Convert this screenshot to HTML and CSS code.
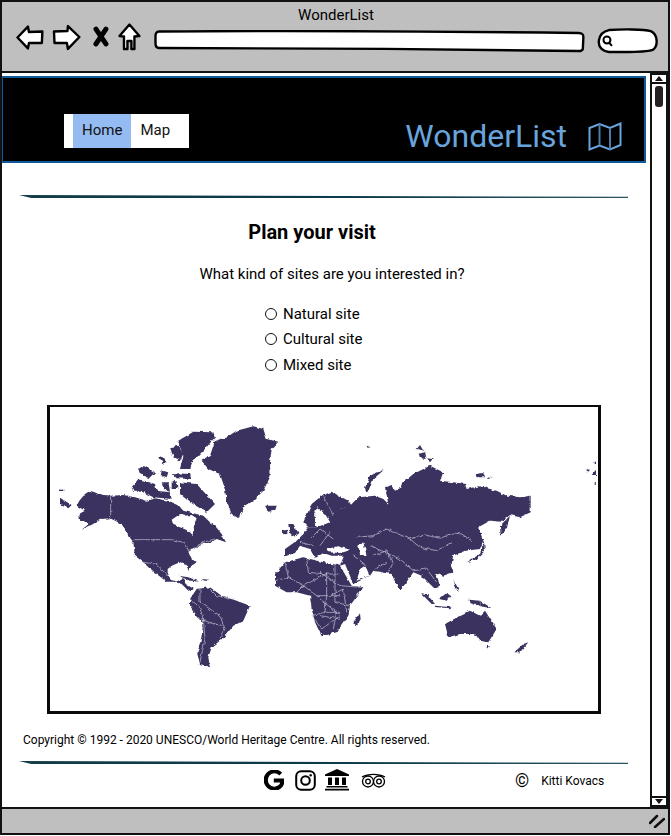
FILE: index.html
```html
<!DOCTYPE html>
<html lang="en">
<head>
<meta charset="utf-8">
<title>WonderList</title>
<link rel="stylesheet" href="styles.css">
</head>
<body>
<div class="window">
  <div class="topbar">
    <div class="win-title">WonderList</div>
    <div class="toolbar">
      <svg class="tool back" width="28" height="25" viewBox="0 0 28 25"><path d="M1.500 12.500 L12 1.500 L13 7 L26.500 6.500 L26 18 L13 18 L12 23.500 Z"/></svg>
      <svg class="tool fwd" width="29" height="27" viewBox="0 0 29 27"><path d="M27.500 13 L16 2 L15.500 7 L2 7.500 L2.500 19 L15 19 L16 25 Z"/></svg>
      <svg class="tool close" width="18" height="21" viewBox="0 0 18 21"><path class="x" d="M4 3 L14 18 M14 3 L4 18"/></svg>
      <svg class="tool home" width="23" height="28" viewBox="0 0 23 28"><path d="M11.500 1.500 L21.500 13 L16.500 13.500 L16.500 26 L13.500 26 L13.500 18 L9.500 18 L9.500 26 L6 26 L6 13.500 L1.500 13 Z"/></svg>
      <svg class="address" width="434" height="23" viewBox="0 0 434 23"><path d="M5 1.500 C120 .5 300 1.500 427 3 Q432 3 431.500 8 L431 19 Q430 21.500 426 21 C300 19 120 18 5 18 Q1.500 18 1.500 13 L1.500 6 Q1.500 1.500 5 1.500 Z"/></svg>
      <svg class="search" width="62" height="26" viewBox="0 0 62 26"><path class="pill" d="M12 2 C25 1 47 1 54 3 C61 6 62 18 56 22 C47 25 25 24 12 24 C4 23 1 18 2 12 C3 6 7 3 12 2 Z"/><circle class="lens" cx="10" cy="12" r="3.500"/><path class="lens" d="M12.500 15 L15 18"/></svg>
    </div>
  </div>

  <div class="middle">
    <main class="page">
      <header class="site-header">
        <nav class="nav">
          <a class="nav-item active">Home</a>
          <a class="nav-item">Map</a>
        </nav>
        <div class="brand">
          <span class="brand-name">WonderList</span>
          <svg class="brand-icon" width="34" height="29" viewBox="0 0 34 29"><path d="M1.500 6 L11.500 2 L22 6 L32.500 1.500 L32.500 23 L22 27.500 L11.500 23.500 L1.500 27.500 Z"/><path class="fold" d="M11.500 2 V23.500 M22 6 V27.500"/></svg>
        </div>
      </header>

      <div class="rule"></div>

      <section class="plan">
        <h1 class="plan-title">Plan your visit</h1>
        <p class="plan-question">What kind of sites are you interested in?</p>
        <div class="options">
          <label class="option"><input class="radio" type="radio" name="kind">Natural site</label>
          <label class="option"><input class="radio" type="radio" name="kind">Cultural site</label>
          <label class="option"><input class="radio" type="radio" name="kind">Mixed site</label>
        </div>
      </section>

      <div class="map-box">
        <svg class="world" width="548" height="303" viewBox="50 408 548 303">
          <defs>
            <filter id="coast" x="-2%" y="-2%" width="104%" height="104%">
              <feTurbulence type="fractalNoise" baseFrequency="0.22" numOctaves="2" seed="4" result="n"/>
              <feDisplacementMap in="SourceGraphic" in2="n" scale="3.500" xChannelSelector="R" yChannelSelector="G"/>
              <feGaussianBlur stdDeviation="0.280"/>
            </filter>
          </defs>
          <g class="coast">
          <g transform="translate(40 400) scale(.33333)">
            <g class="land">
              <path d="M118 305 L135 285 L150 275 L185 287 L212 290 L250 288 L285 295 L320 305 L345 298 L385 305 L415 318 L430 335 L470 345 L490 350 L510 370 L525 380 L545 405 L558 430 L530 420 L510 432 L490 432 L465 448 L445 458 L450 470 L470 490 L455 500 L445 515 L440 495 L420 490 L395 500 L383 510 L383 530 L392 542 L410 548 L430 540 L437 555 L462 570 L445 575 L425 555 L400 548 L380 548 L350 525 L325 505 L310 490 L285 470 L280 430 L262 405 L245 375 L210 358 L185 360 L150 380 L125 392 L150 372 L120 365 L118 345 L135 335 L110 320 Z"/>
              <path class="sea" d="M395 362 L420 345 L432 350 L455 348 L470 358 L463 375 L458 408 L445 395 L420 385 L400 378 Z"/>
              <path d="M590 95 L640 82 L670 90 L680 120 L715 128 L695 150 L690 190 L692 230 L670 275 L640 305 L610 325 L595 358 L575 345 L560 310 L555 270 L540 225 L505 210 L485 185 L510 170 L525 125 L560 115 Z"/>
              <path d="M415 125 L460 98 L520 100 L525 115 L495 150 L460 185 L450 210 L420 210 L430 170 L420 145 Z"/>
              <path d="M390 145 L415 140 L430 165 L420 185 L400 175 Z"/>
              <path d="M275 265 L295 240 L345 255 L350 275 L390 280 L395 300 L340 295 L300 275 L280 275 Z"/>
              <path d="M295 210 L310 200 L345 220 L325 240 L300 225 Z"/>
              <path d="M355 175 L365 172 L380 190 L370 195 Z"/>
              <path d="M365 215 L385 220 L380 235 L362 230 Z"/>
              <path d="M395 222 L450 225 L455 240 L410 238 Z"/>
              <path d="M420 250 L470 255 L525 315 L500 340 L450 310 L420 285 Z"/>
              <path d="M365 250 L385 250 L390 275 L370 270 Z"/>
              <path d="M395 245 L410 248 L412 270 L395 270 Z"/>
              <path d="M60 296 L95 318 L85 328 L60 318 Z"/>
              <path d="M60 272 H70 V276 H60 Z"/>
              <path d="M415 530 L445 535 L480 548 L450 545 Z"/>
              <path d="M485 540 L505 542 L495 546 Z"/>
              <path d="M450 600 L470 570 L510 565 L545 590 L590 605 L630 620 L610 665 L580 680 L560 705 L540 725 L515 745 L505 775 L510 805 L480 795 L472 765 L485 710 L490 670 L470 650 L450 620 Z"/>
              <path d="M705 525 L735 490 L790 475 L850 490 L900 500 L935 560 L970 565 L930 620 L925 650 L890 700 L845 712 L825 670 L815 630 L810 590 L770 580 L740 580 L705 560 Z"/>
              <path d="M675 320 L710 320 L705 335 L685 338 Z"/>
              <path d="M745 375 L760 375 L777 405 L755 412 L748 395 Z"/>
              <path d="M728 395 L742 392 L742 405 L730 406 Z"/>
            </g>
            <g class="border">
              <path d="M212 290 V358"/>
              <path d="M280 422 L395 422 L430 430 L445 455 L490 430 L525 420"/>
              <path d="M310 490 L345 495 L385 530"/>
              <path d="M480 570 L480 610 L510 630 L540 650 L555 690 L540 715"/>
              <path d="M490 660 L495 720 L480 790"/>
              <path d="M450 600 L480 625 L490 665 L545 680"/>
              <path d="M510 570 L530 590 L570 600"/>
              <path d="M735 490 L745 535 L705 545 M745 535 L790 560 L860 525 L895 525 M800 480 L805 520 L860 525 L860 590 L900 590"/>
              <path d="M770 580 L790 560 L830 590 L860 590 L855 640 L815 650 L845 690 L900 650 M855 640 L900 640 M885 500 V610 L930 620"/>
              <path d="M785 415 L840 425 L890 420 M810 405 L815 455 M840 390 L850 440 M865 385 L875 445 M770 430 L790 445"/>
              <path d="M820 380 L830 320 M860 300 L875 360"/>
            </g>
          </g>
          <g transform="translate(320 400) scale(.33333)">
            <g class="land">
              <path d="M90 320 L115 295 L165 290 L190 300 L205 315 L195 265 L215 258 L225 275 L245 265 L250 250 L280 225 L330 200 L370 220 L360 245 L400 250 L435 255 L440 270 L480 262 L530 275 L560 290 L600 295 L632 290 L632 340 L600 355 L570 348 L545 368 L510 365 L475 385 L490 425 L480 450 L435 455 L400 470 L395 495 L400 520 L370 530 L345 520 L360 560 L345 570 L320 545 L305 530 L280 520 L245 570 L235 570 L215 525 L160 515 L150 530 L100 555 L60 500 L72 470 L35 470 L10 462 L-15 478 L-30 450 L-60 440 L-75 462 L-105 472 L-105 450 L-70 425 L-50 405 L-35 385 L-10 385 L30 370 L60 330 Z"/>
              <path d="M-50 370 L-25 315 L5 290 L35 278 L85 305 L95 320 L60 330 L55 370 L40 385 L15 345 L-8 325 L-18 345 L-10 385 L-35 385 Z"/>
              <path d="M135 270 L150 230 L195 210 L160 240 L145 280 Z"/>
              <path d="M290 150 L300 138 L310 155 Z"/>
              <path d="M297 165 L315 158 L320 180 L300 178 Z"/>
              <path d="M320 178 L338 180 L330 190 Z"/>
              <path d="M140 140 L152 145 L142 146 Z"/>
              <path d="M467 225 L490 222 L495 235 L470 235 Z"/>
              <path d="M505 232 L518 235 L505 237 Z"/>
              <path d="M540 380 L570 350 L560 390 L542 410 Z"/>
              <path d="M440 490 L480 465 L490 440 L480 410 L492 430 L495 455 L470 480 Z"/>
              <path d="M100 670 L120 640 L122 660 L110 682 Z"/>
              <path d="M375 675 L420 650 L450 635 L480 650 L495 635 L530 690 L505 730 L480 725 L465 705 L420 705 L385 715 Z"/>
              <path d="M497 740 L510 742 L503 750 Z"/>
              <path d="M583 760 L610 735 L625 730 L600 760 Z"/>
              <path d="M303 583 L320 585 L345 615 L335 615 Z"/>
              <path d="M357 600 L380 582 L392 590 L380 605 Z"/>
              <path d="M445 602 L480 605 L515 628 L480 622 L450 612 Z"/>
              <path d="M345 620 L395 625 L390 628 L345 624 Z"/>
              <path d="M400 540 L415 570 L420 578 L408 570 Z"/>
              <path d="M795 210 L810 212 L805 218 Z"/>
              <path d="M815 228 L828 212 L828 228 Z"/>
              <path d="M824 188 H828 V195 H824 Z"/>
              <path d="M824 250 H828 V257 H824 Z"/>
              <path class="sea" d="M20 450 L55 442 L90 452 L60 462 L25 460 Z"/>
              <path class="sea" d="M115 440 L130 430 L140 470 L120 465 Z"/>
              <path class="sea" d="M60 500 L75 495 L100 555 L90 545 Z"/>
              <path class="sea" d="M150 530 L110 545 L120 510 L135 500 Z"/>
            </g>
            <g class="border">
              <path d="M110 415 L160 410 L200 390 L235 405 L270 420 L315 408 L360 418 L400 402 L425 405 L455 425"/>
              <path d="M270 420 L300 445 L350 455 L395 430"/>
              <path d="M150 440 L195 460 L240 480 L280 515 L320 510 L350 550"/>
              <path d="M160 470 L200 455 L220 490 L205 520 M165 510 L200 490 M100 470 L140 500"/>
              <path d="M0 520 L60 560 L125 565 M30 590 L70 570 L80 640 M0 600 L50 640 L40 690 M0 650 L60 660"/>
              <path d="M0 440 L30 400 M-30 420 L0 390 L40 420 M-60 430 L-20 440 M10 290 L40 350"/>
              <path d="M480 605 V625"/>
            </g>
          </g>
          </g>
        </svg>
      </div>

      <p class="copyright">Copyright © 1992 - 2020 UNESCO/World Heritage Centre. All rights reserved.</p>

      <div class="rule rule-footer"></div>

      <footer class="site-footer">
        <div class="socials">
          <svg class="ic-g" width="20" height="20" viewBox="0 0 24 24"><path d="M12.480 10.920v3.280h7.840c-.24 1.840-.853 3.187-1.787 4.133-1.147 1.147-2.933 2.400-6.053 2.400-4.827 0-8.600-3.893-8.600-8.720s3.773-8.720 8.600-8.720c2.600 0 4.507 1.027 5.907 2.347l2.307-2.307C18.747 1.440 16.133 0 12.480 0 5.867 0 .307 5.387.307 12s5.560 12 12.173 12c3.573 0 6.267-1.173 8.373-3.360 2.160-2.160 2.840-5.213 2.840-7.667 0-.76-.053-1.467-.173-2.053H12.480z"/></svg>
          <svg class="ic-insta" width="21" height="21" viewBox="0 0 21 21"><rect x="1.200" y="1.200" width="18.600" height="18.600" rx="5"/><circle cx="10.500" cy="10.500" r="4.300"/><circle class="dot" cx="15.700" cy="5.300" r="1.200"/></svg>
          <svg class="ic-museum" width="24" height="22" viewBox="0 0 24 22"><path d="M12 0 L24 5.500 V7 H0 V5.500 Z"/><path d="M3 8.500 H7 V16 H3 Z M10 8.500 H14 V16 H10 Z M17 8.500 H21 V16 H17 Z"/><path d="M1.500 17 H22.500 V18.500 H1.500 Z M0 19.700 H24 V21.500 H0 Z"/></svg>
          <svg class="ic-owl" width="25" height="15" viewBox="0 0 25 15"><path class="owl-top" d="M1 4 C7 .5 18 .5 24 4"/><circle cx="7" cy="8.500" r="5.500"/><circle cx="18" cy="8.500" r="5.500"/><circle cx="7" cy="8.500" r="2.300"/><circle cx="18" cy="8.500" r="2.300"/></svg>
        </div>
        <div class="credit">
          <span class="credit-mark">©</span>
          <span class="credit-name">Kitti Kovacs</span>
        </div>
      </footer>
    </main>

    <aside class="scrollbar">
      <div class="scroll-btn"><span class="tri-up"></span></div>
      <div class="scroll-track"><div class="scroll-thumb"></div></div>
      <div class="scroll-btn"><span class="tri-down"></span></div>
    </aside>
  </div>

  <div class="bottombar">
    <svg class="grip" width="16" height="14" viewBox="0 0 16 14"><path d="M1 9 L8 2 M6 13 L15 5"/></svg>
  </div>
</div>
</body>
</html>
```
FILE: styles.css
```css
* { box-sizing: border-box; }

html, body {
  margin: 0;
  padding: 0;
  background: #fff;
}

body {
  font-family: Roboto, "Liberation Sans", sans-serif;
  color: #000;
}

.window {
  width: 670px;
  height: 835px;
  border: 2px solid #111;
  display: flex;
  flex-direction: column;
  overflow: hidden;
}

/* browser chrome */
.topbar {
  height: 71px;
  flex: none;
  background: #bfbfbf;
  border-bottom: 2px solid #111;
  padding: 6px 9px 0 14px;
}

.win-title {
  text-align: center;
  font-size: 15px;
  line-height: 15px;
  margin-right: 3px;
}

.toolbar {
  display: flex;
  align-items: flex-start;
  margin-top: 2px;
  height: 30px;
}

.tool path {
  fill: #fff;
  stroke: #000;
  stroke-width: 2.400;
  stroke-linejoin: round;
}

.tool.fwd { margin: -1px 0 0 8px; }
.tool.close { margin: 1px 0 0 11px; }
.tool.home { margin: -2px 0 0 8px; }

.tool .x {
  fill: none;
  stroke-width: 5;
  stroke-linecap: round;
}

.address {
  margin: 5px 0 0 13px;
}

.address path, .pill {
  fill: #fff;
  stroke: #000;
  stroke-width: 2.400;
}

.search {
  margin: 3px 0 0 12px;
}

.lens {
  fill: none;
  stroke: #000;
  stroke-width: 2;
}

.middle {
  flex: 1;
  display: flex;
  min-height: 0;
}

.page {
  flex: 1;
  min-width: 0;
  padding-top: 3px;
}

/* site header */
.site-header {
  height: 87px;
  width: 645px;
  margin-left: -1px;
  background: #000;
  border: 2px solid #0f5a9a;
  display: flex;
  align-items: flex-start;
  justify-content: space-between;
  padding: 36px 22px 0 61px;
}

.nav {
  display: flex;
  background: #fff;
  height: 34px;
  padding: 0 10px 0 9px;
}

.nav-item {
  font-size: 15px;
  line-height: 33px;
  color: #111;
  padding: 0 9px;
}

.nav-item.active {
  background: #94bbf2;
}

.brand {
  display: flex;
  align-items: center;
  gap: 21px;
  margin-top: 6px;
}

.brand-name {
  font-size: 32px;
  line-height: 32px;
  font-weight: 400;
  color: #69a4dc;
}

.brand-icon path {
  fill: none;
  stroke: #69a4dc;
  stroke-width: 2;
}

.brand-icon .fold {
  stroke: #4f7ba6;
}

/* dividers */
.rule {
  height: 3px;
  width: 609px;
  margin: 32px 0 0 17px;
  background: linear-gradient(90deg, #123c48, #0b3a4c 55%, #2c5562);
  clip-path: polygon(0 0, 100% 60%, 100% 100%, 2% 100%);
}

/* plan section */
.plan {
  text-align: center;
}

.plan-title {
  margin: 22px 0 0;
  padding-right: 28px;
  font-size: 20px;
  line-height: 24px;
  font-weight: 700;
}

.plan-question {
  margin: 21px 0 0;
  padding-left: 12px;
  font-size: 15px;
  line-height: 18px;
}

.options {
  margin: 21.750px 0 0 263px;
  display: flex;
  flex-direction: column;
  gap: 7.500px;
  text-align: left;
}

.option {
  display: flex;
  align-items: center;
  font-size: 15px;
  line-height: 18px;
}

.radio {
  appearance: none;
  width: 12px;
  height: 12px;
  margin: 0 6px 0 0;
  border: 1.300px solid #111;
  border-radius: 50%;
  background: #fff;
}

/* map */
.map-box {
  width: 554px;
  height: 309px;
  margin: 31.250px 0 0 45px;
  border: 3px solid #0a0a0a;
  border-top-width: 2px;
  background: #fff;
}

.world {
  display: block;
}

.coast { filter: url(#coast); }

.land path { fill: #3a3360; }
.land .sea { fill: #fff; }

.border path {
  fill: none;
  stroke: #cfcddc;
  stroke-width: 2;
}

/* footer */
.copyright {
  margin: 19px 0 0 21px;
  font-size: 12px;
  line-height: 14px;
}

.rule-footer {
  margin-top: 14px;
}

.site-footer {
  display: flex;
  align-items: flex-start;
  height: 42px;
  padding: 4px 0 0 261px;
}

.socials {
  display: flex;
  align-items: center;
  gap: 10px;
  height: 24px;
}

.ic-g path { fill: #000; stroke: #000; stroke-width: 1.400; }
.ic-g { margin-left: 1px; }

.ic-insta { margin-left: 1px; }
.ic-insta rect, .ic-insta circle {
  fill: none;
  stroke: #000;
  stroke-width: 2;
}
.ic-insta .dot { fill: #000; stroke: none; }

.ic-museum { margin-left: -1px; }
.ic-museum path { fill: #000; }

.ic-owl { margin-left: 2px; }
.ic-owl circle, .ic-owl path {
  fill: none;
  stroke: #000;
  stroke-width: 1.300;
}

.credit {
  display: flex;
  align-items: center;
  margin-left: 129px;
  height: 24px;
}

.credit-mark {
  font-size: 18px;
  line-height: 18px;
  margin-top: 2px;
}

.credit-name {
  margin-left: 12px;
  font-size: 12px;
  line-height: 14px;
  margin-top: 1px;
}

/* scrollbar */
.scrollbar {
  flex: none;
  width: 18px;
  display: flex;
  flex-direction: column;
  border-left: 2px solid #111;
  border-right: 2px solid #111;
  background: #fff;
}

.scroll-btn {
  height: 11px;
  flex: none;
  display: flex;
  align-items: center;
  justify-content: center;
  border-top: 2px solid #111;
  border-bottom: 2px solid #111;
}

.tri-up, .tri-down {
  width: 0;
  height: 0;
  border-left: 4px solid transparent;
  border-right: 4px solid transparent;
}
.tri-up { border-bottom: 5px solid #111; }
.tri-down { border-top: 5px solid #111; }

.scroll-track {
  flex: 1;
  display: flex;
  justify-content: center;
  padding-top: 2px;
}

.scroll-thumb {
  width: 8px;
  height: 21px;
  background: #222;
  border-radius: 3px;
}

.bottombar {
  height: 26px;
  flex: none;
  background: #bfbfbf;
  border-top: 2px solid #111;
  display: flex;
  justify-content: flex-end;
  align-items: center;
  padding-right: 3px;
}

.grip path {
  fill: none;
  stroke: #111;
  stroke-width: 2.500;
  stroke-linecap: round;
}
```
